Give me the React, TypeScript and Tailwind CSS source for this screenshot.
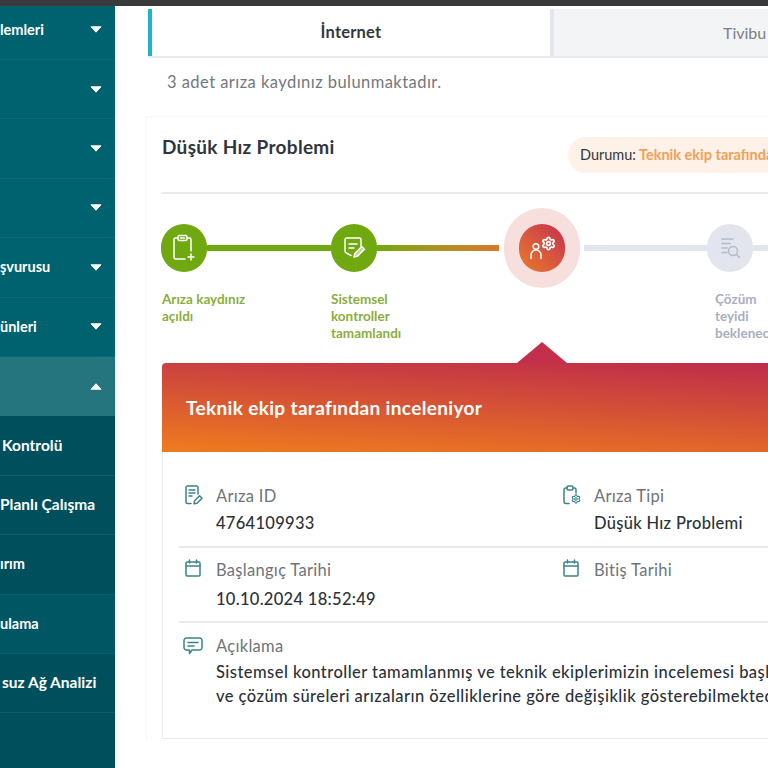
import { Settings } from "lucide-react";

const MENU_ROWS = [
  { text: "lemleri", h: "h-[54px] pb-[6px]" },
  { text: "", h: "h-[59.4px]" },
  { text: "", h: "h-[59.4px]" },
  { text: "", h: "h-[59.4px]" },
  { text: "şvurusu", h: "h-[59.4px]" },
  { text: "ünleri", h: "h-[59.4px]" },
];

const SUB_ROWS = [
  { text: "Kontrolü", cls: "pl-[2px] text-[15.5px]", bg: "bg-[#004f5c]" },
  { text: "Planlı Çalışma", cls: "text-[15.5px]", bg: "bg-[#004f5c]" },
  { text: "ırım", cls: "text-[14.5px]", bg: "bg-[#004f5c]" },
  { text: "ulama", cls: "text-[14.5px]", bg: "bg-[#005764]" },
  { text: "suz Ağ Analizi", cls: "pl-[2px] text-[15.5px]", bg: "bg-[#004f5c]" },
  { text: "", cls: "", bg: "bg-[#004f5c]" },
];

const Caret = ({ up = false }: { up?: boolean }) => (
  <svg width="12" height="7" viewBox="0 0 12 7" className={up ? "rotate-180" : ""}>
    <path d="M1 .8h10L6 6.2z" fill="#fff" stroke="#fff" strokeWidth="1" strokeLinejoin="round" />
  </svg>
);

const iconProps = {
  fill: "none",
  stroke: "currentColor",
  strokeWidth: 1.5,
  strokeLinecap: "round" as const,
  strokeLinejoin: "round" as const,
};

const ClipboardPlus = () => (
  <svg width="24" height="28" viewBox="0 0 24 28" {...iconProps}>
    <path d="M13 25H3.500a1.500 1.500 0 0 1-1.500-1.500v-18A1.500 1.500 0 0 1 3.500 4H6M15 4h2.500A1.500 1.500 0 0 1 19 5.500V17" />
    <rect x="6" y="1.500" width="9" height="5" rx="1.500" />
    <path d="M8.500 4h4M19 20v6M16 23h6" />
  </svg>
);

const NotePen = () => (
  <svg width="26" height="26" viewBox="0 0 26 26" {...iconProps}>
    <path d="M10 20.500 5.500 18A2 2 0 0 1 4 16V4.500A1.500 1.500 0 0 1 5.500 3h13A1.500 1.500 0 0 1 20 4.500V11" />
    <path d="M8 9h8M8 13h5" />
    <path d="m13 22 .8-3.500 7-7 2.700 2.700-7 7z" fill="currentColor" fillOpacity=".55" />
  </svg>
);

const UserGear = () => (
  <div className="relative w-[27px] h-[26px]">
    <svg width="26" height="26" viewBox="0 0 26 26" {...iconProps}>
      <circle cx="7" cy="11.500" r="2.800" />
      <path d="M2 23.500v-3.500a5 5 0 0 1 10 0v3.500" />
    </svg>
    <Settings size={15} strokeWidth={2.8} className="absolute right-0 top-[1px]" />
  </div>
);

const SearchList = () => (
  <svg width="26" height="26" viewBox="0 0 26 26" {...iconProps}>
    <path d="M5 4h11M5 8.500h8M5 13h5M5 17.500h5" />
    <circle cx="16" cy="16" r="4.500" />
    <path d="m19.500 19.500 3 3" />
  </svg>
);

const NoteSmall = () => (
  <svg width="18" height="20" viewBox="0 0 18 20" {...iconProps}>
    <path d="M6 18.500H2.500A1.500 1.500 0 0 1 1 17V2.500A1.500 1.500 0 0 1 2.500 1h9A1.500 1.500 0 0 1 13 2.500V9" />
    <path d="M4 5h6M4 8h6M4 11h3" />
    <path d="m9 18.800.6-3 5-5 2.400 2.400-5 5z" />
  </svg>
);

const ClipboardGear = () => (
  <div className="relative w-[18px] h-[20px]">
    <svg width="18" height="20" viewBox="0 0 18 20" {...iconProps}>
      <path d="M6 18.500H2.500A1.500 1.500 0 0 1 1 17V4.500A1.500 1.500 0 0 1 2.500 3H4M10 3h1.500A1.500 1.500 0 0 1 13 4.500V8" />
      <rect x="4" y="1" width="6" height="4" rx="1.200" />
    </svg>
    <Settings size={10} strokeWidth={2.6} className="absolute right-0 bottom-[1px]" />
  </div>
);

const Calendar = () => (
  <svg width="16" height="18" viewBox="0 0 16 18" {...iconProps}>
    <rect x="1" y="3" width="14" height="14" rx="1" />
    <path d="M1 7h14M4.500 1v3M11.500 1v3" />
  </svg>
);

const Comment = () => (
  <svg width="20" height="18" viewBox="0 0 20 18" {...iconProps}>
    <path d="M3.500 1h13A2.500 2.500 0 0 1 19 3.500v7a2.500 2.500 0 0 1-2.500 2.500H9l-2.500 3.500V13h-3A2.500 2.500 0 0 1 1 10.500v-7A2.500 2.500 0 0 1 3.500 1z" />
    <path d="M5 5.500h10M5 9h6" />
  </svg>
);

const InfoCell = ({
  icon,
  label,
  value,
  valueGap = "mt-[3px]",
}: {
  icon: React.ReactNode;
  label: string;
  value?: string;
  valueGap?: string;
}) => (
  <div className="flex">
    <div className="w-[31px] pt-[1px] text-[#3d8288] shrink-0">{icon}</div>
    <div>
      <p className="text-[16.5px] leading-[24px] tracking-[0.3px] text-[#6f7479]">{label}</p>
      {value && (
        <p className={`text-[16.5px] leading-[24px] tracking-[0.3px] ${valueGap} font-medium text-[#2c3138]`}>{value}</p>
      )}
    </div>
  </div>
);

const App = () => {
  return (
    <div
      className="w-[768px] h-[768px] overflow-hidden bg-white flex flex-col"
      style={{ fontFamily: "Lato, 'Noto Sans', sans-serif" }}
    >
      <div className="h-[6px] bg-[#3a3a3a] shrink-0" />

      <div className="flex flex-1 min-h-0">
        {/* Sidebar */}
        <aside className="w-[115px] shrink-0 flex flex-col overflow-hidden bg-[#004f5c] text-white font-bold">
          {MENU_ROWS.map((row, i) => (
            <div
              key={i}
              className={`${row.h} shrink-0 flex items-center justify-between pr-[13px] bg-[#00626f] border-b border-[#0a6c78]`}
            >
              <span className="whitespace-nowrap text-[14.5px]">{row.text}</span>
              <Caret />
            </div>
          ))}
          <div className="h-[59.400px] shrink-0 flex items-center justify-end pr-[13px] bg-[#25757f]">
            <Caret up />
          </div>
          {SUB_ROWS.map((row, i) => (
            <div
              key={i}
              className={`h-[59.400px] shrink-0 flex items-center ${row.bg} border-b border-[#0a5f6b]`}
            >
              <span className={`whitespace-nowrap ${row.cls}`}>{row.text}</span>
            </div>
          ))}
        </aside>

        {/* Main */}
        <main className="w-[700px] shrink-0 pl-[33px] pt-[3px]">
          {/* Tabs */}
          <div className="flex h-[49px] border-b-2 border-[#e8eaee]">
            <div className="w-[402px] shrink-0 border-l-4 border-[#1cb5c9] flex items-center justify-center text-[16.5px] tracking-[0.2px] font-bold text-[#33383f]">
              İnternet
            </div>
            <div className="flex-1 border-l-4 border-[#e3e6ef] bg-[#f3f4f6] flex items-center pl-[169px] text-[16px] text-[#7b8087]">
              Tivibu
            </div>
          </div>

          <p className="pl-[19px] pt-[12px] text-[16.5px] leading-[24px] tracking-[0.45px] text-[#74787e]">
            3 adet arıza kaydınız bulunmaktadır.
          </p>

          {/* Fault card */}
          <section className="mt-[22px] -ml-[2px] pl-[15px] pt-[15px] border-l border-t border-[#f8f8f8]">
            <div className="flex items-start h-[48px] mr-[-60px]">
              <h2 className="w-[406px] shrink-0 mt-[3px] text-[19px] leading-[24px] font-bold tracking-[0.3px] text-[#30353c]">
                Düşük Hız Problemi
              </h2>
              <div className="flex items-center h-[36px] mt-[5px] pl-[12px] rounded-l-full bg-[#fdf1e8] text-[14.5px] whitespace-nowrap">
                <span className="text-[#33383f] mr-[3px]">Durumu:</span>
                <span className="font-bold text-[#f1a158]">Teknik ekip tarafından inceleniyor</span>
              </div>
            </div>
            <div className="h-[2px] bg-[#e8eaee] mt-[12px]" />

            {/* Stepper */}
            <div className="flex items-center mt-[14px] -ml-[1px] h-[80px]">
              <div className="w-[46px] h-[48px] rounded-full bg-[#6fa80f] text-white flex items-center justify-center shrink-0">
                <ClipboardPlus />
              </div>
              <div className="w-[124px] h-[6px] bg-[#6fa80f]" />
              <div className="w-[46px] h-[48px] rounded-full bg-[#6fa80f] text-white flex items-center justify-center shrink-0">
                <NotePen />
              </div>
              <div className="w-[122px] h-[6px] bg-gradient-to-r from-[#6fa80f] to-[#d9782b]" />
              <div className="ml-[5px] w-[76px] h-[80px] rounded-full bg-[#f6dfdc] flex items-center justify-center shrink-0">
                <div className="w-[46px] h-[48px] rounded-full bg-gradient-to-tr from-[#ea7a20] to-[#c42b4c] text-white flex items-center justify-center">
                  <UserGear />
                </div>
              </div>
              <div className="ml-[4px] w-[123px] h-[6px] bg-[#e2e5ee]" />
              <div className="w-[46px] h-[48px] rounded-full bg-[#e2e5ee] text-[#b4bacb] flex items-center justify-center shrink-0">
                <SearchList />
              </div>
              <div className="w-[60px] h-[6px] bg-[#e2e5ee]" />
            </div>

            {/* Step labels */}
            <div className="flex mt-[3px] text-[13.5px] leading-[17px] font-bold h-[72px]">
              <p className="w-[169px] text-[#8aae3c] shrink-0">
                Arıza kaydınız
                <br />
                açıldı
              </p>
              <p className="w-[384px] text-[#8aae3c] shrink-0">
                Sistemsel
                <br />
                kontroller
                <br />
                tamamlandı
              </p>
              <p className="text-[#a9aec0] whitespace-nowrap">
                Çözüm
                <br />
                teyidi
                <br />
                beklenecek
              </p>
            </div>

            {/* Active step panel */}
            <div className="relative h-[89px] flex items-center pt-[2px] pl-[24px] rounded-t-[4px] bg-[linear-gradient(183deg,#bd2a4c,#ee7c1e)] text-white text-[19px] font-bold tracking-[0.35px]">
              <div className="absolute left-[355px] -top-[21px] w-0 h-0 border-l-[25px] border-r-[25px] border-b-[21px] border-l-transparent border-r-transparent border-b-[#c4304c]" />
              Teknik ekip tarafından inceleniyor
            </div>

            {/* Detail box */}
            <div className="border border-t-0 border-[#e8eaee] h-[287px] pl-[16px] pt-[32px]">
              <div className="grid grid-cols-[378px_1fr] pl-[6px] h-[62px]">
                <InfoCell icon={<NoteSmall />} label="Arıza ID" value="4764109933" />
                <InfoCell icon={<ClipboardGear />} label="Arıza Tipi" value="Düşük Hız Problemi" />
              </div>
              <div className="h-[2px] bg-[#e8eaee]" />
              <div className="grid grid-cols-[378px_1fr] pl-[6px] h-[73px] pt-[10px]">
                <InfoCell
                  icon={<Calendar />}
                  label="Başlangıç Tarihi"
                  value="10.10.2024 18:52:49"
                  valueGap="mt-[5px]"
                />
                <InfoCell icon={<Calendar />} label="Bitiş Tarihi" />
              </div>
              <div className="h-[2px] bg-[#e8eaee]" />
              <div className="flex pl-[4px] pt-[11px]">
                <div className="w-[33px] pt-[3px] text-[#3d8288] shrink-0">
                  <Comment />
                </div>
                <div className="whitespace-nowrap">
                  <p className="text-[16.5px] leading-[24px] tracking-[0.3px] text-[#6f7479]">Açıklama</p>
                  <p className="text-[16.5px] leading-[24px] tracking-[0.45px] mt-[2px] text-[#2c3138] font-medium">
                    Sistemsel kontroller tamamlanmış ve teknik ekiplerimizin incelemesi başlamıştır.
                  </p>
                  <p className="text-[16.5px] leading-[24px] tracking-[0.45px] text-[#2c3138] font-medium">
                    ve çözüm süreleri arızaların özelliklerine göre değişiklik gösterebilmektedir.
                  </p>
                </div>
              </div>
            </div>
          </section>
        </main>
      </div>
    </div>
  );
};

export default App;
